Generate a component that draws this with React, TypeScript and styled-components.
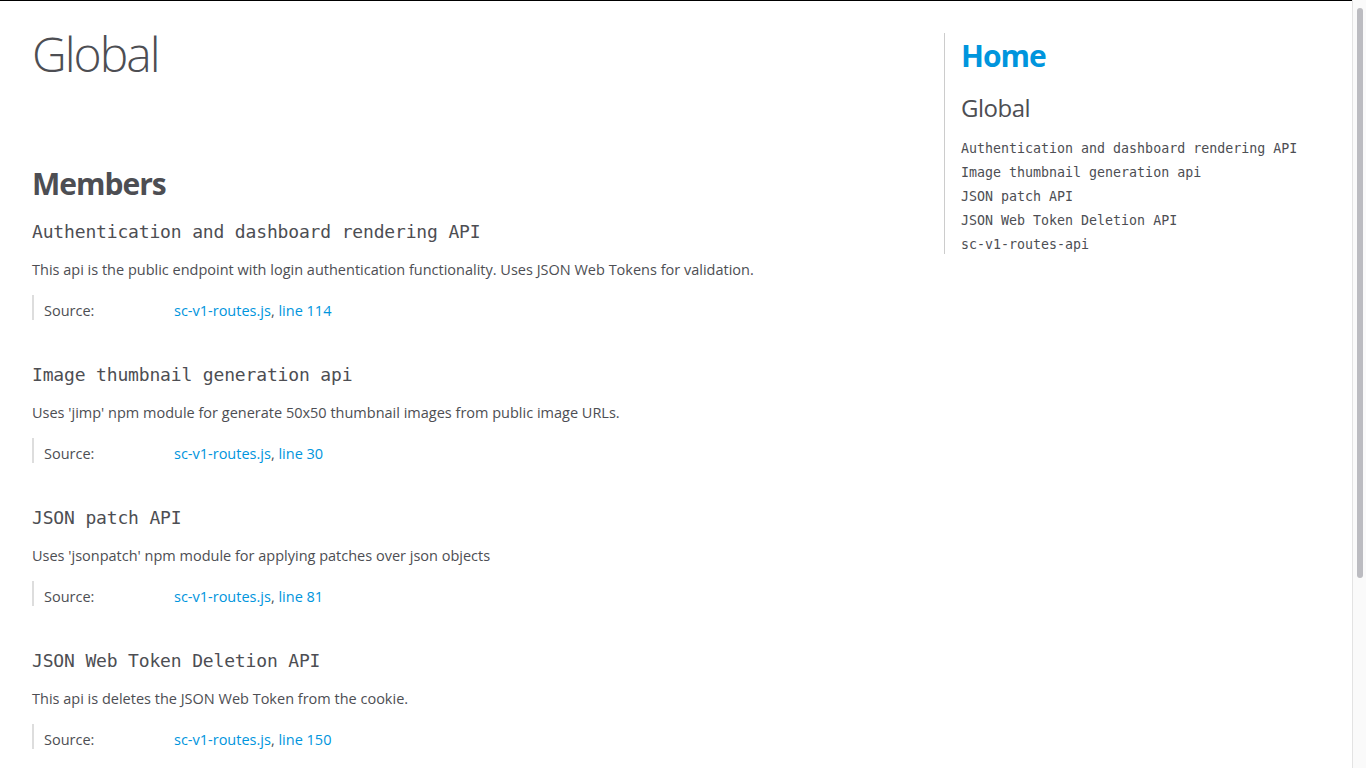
import * as React from 'react'
import styled, { createGlobalStyle } from 'styled-components'

const GlobalStyle = createGlobalStyle`
  html, body {
    margin: 0;
    padding: 0;
    overflow: hidden;
  }
  body {
    background: #fff;
    color: #4d4e53;
    font-family: 'Open Sans', 'Liberation Sans', sans-serif;
    font-size: 14.5px;
  }
`

// browser window: the document on the left, its scrollbar on the right
const Viewport = styled.div`
  display: flex;
  height: 100vh;
  overflow: hidden;
`

const Document = styled.div`
  flex: 1;
  min-width: 0;
  overflow: hidden;
`

const ScrollTrack = styled.div`
  flex: 0 0 14px;
  box-sizing: border-box;
  background: #fafafa;
  border-left: 1px solid #e3e3e3;
  padding: 8px 3px 0 4px;
`

const ScrollThumb = styled.div`
  height: 570px;
  border-radius: 4px;
  background: #bcbcc1;
`

const Page = styled.div`
  display: flex;
  align-items: flex-start;
  padding: 8px 8px 30px;
  border-top: 1px solid #000;
`

const Main = styled.div`
  flex: 1;
`

const PageTitle = styled.h1`
  margin: 12px 24px 20px;
  font-size: 48px;
  font-weight: 300;
  letter-spacing: -2px;
`

const Section = styled.section`
  padding: 57px 24px 12px;
  margin-right: 30px;
  border-bottom: 1px solid #ccc;
`

const SubsectionTitle = styled.h3`
  margin: 0 0 17px;
  font-size: 30px;
  font-weight: 700;
  letter-spacing: -1px;
`

const MemberName = styled.h4`
  margin: 0;
  font-family: 'DejaVu Sans Mono', monospace;
  font-size: 18px;
  font-weight: 400;
  letter-spacing: -0.16px;
`

const Description = styled.div`
  margin: 18px 0 15px;
`

const Details = styled.dl`
  display: flex;
  margin: 16px 0 44px;
  border-left: 2px solid #ddd;
`

const Term = styled.dt`
  width: 130px;
  padding: 6px 0 0 10px;
`

const Value = styled.dd`
  margin: 0;
  padding-top: 6px;
`

const Link = styled.a`
  color: #0095dd;
  text-decoration: none;
`

const Nav = styled.nav`
  flex: 0 0 400px;
  box-sizing: border-box;
  margin-top: 24px;
  padding-left: 16px;
  border-left: 1px solid #ccc;
`

const NavHome = styled.h2`
  margin: 2px 0 15px;
  font-size: 30px;
  font-weight: 700;
  letter-spacing: -1px;
  a {
    color: #0095dd;
    text-decoration: none;
  }
`

const NavHeading = styled.h3`
  margin: 0 0 16px;
  font-size: 24px;
  font-weight: 400;
  letter-spacing: -0.5px;
`

const NavList = styled.ul`
  margin: 0;
  padding: 0;
  list-style: none;
`

const NavItem = styled.li`
  margin-top: 6px;
  a {
    display: block;
    font-family: 'DejaVu Sans Mono', monospace;
    font-size: 13.3px;
    line-height: 18px;
    color: #4d4e53;
    text-decoration: none;
  }
`

const Footer = styled.footer`
  padding: 6px 24px;
  margin-top: 12px;
  font-style: italic;
  font-size: 90%;
`

const members = [
  {
    name: 'Authentication and dashboard rendering API',
    desc: 'This api is the public endpoint with login authentication functionality. Uses JSON Web Tokens for validation.',
    line: 114,
  },
  {
    name: 'Image thumbnail generation api',
    desc: "Uses 'jimp' npm module for generate 50x50 thumbnail images from public image URLs.",
    line: 30,
  },
  {
    name: 'JSON patch API',
    desc: "Uses 'jsonpatch' npm module for applying patches over json objects",
    line: 81,
  },
  {
    name: 'JSON Web Token Deletion API',
    desc: 'This api is deletes the JSON Web Token from the cookie.',
    line: 150,
  },
  {
    name: 'sc-v1-routes-api',
    desc: 'Express router holding all the v1 API routes.',
    line: 9,
  },
]

export default function App() {
  return (
    <Viewport>
      <GlobalStyle />
      <Document>
        <Page>
          <Main>
            <PageTitle>Global</PageTitle>
            <Section>
              <article>
                <SubsectionTitle>Members</SubsectionTitle>
                {members.map(m => (
                  <div key={m.name}>
                    <MemberName>{m.name}</MemberName>
                    <Description>{m.desc}</Description>
                    <Details>
                      <Term>Source:</Term>
                      <Value>
                        <Link href="#">sc-v1-routes.js</Link>,{' '}
                        <Link href="#">line {m.line}</Link>
                      </Value>
                    </Details>
                  </div>
                ))}
              </article>
            </Section>
            <Footer>
              Documentation generated by <Link href="#">JSDoc 3.5.5</Link>
            </Footer>
          </Main>
          <Nav>
            <NavHome>
              <a href="#">Home</a>
            </NavHome>
            <NavHeading>Global</NavHeading>
            <NavList>
              {members.map(m => (
                <NavItem key={m.name}>
                  <a href="#">{m.name}</a>
                </NavItem>
              ))}
            </NavList>
          </Nav>
        </Page>
      </Document>
      <ScrollTrack>
        <ScrollThumb />
      </ScrollTrack>
    </Viewport>
  )
}
